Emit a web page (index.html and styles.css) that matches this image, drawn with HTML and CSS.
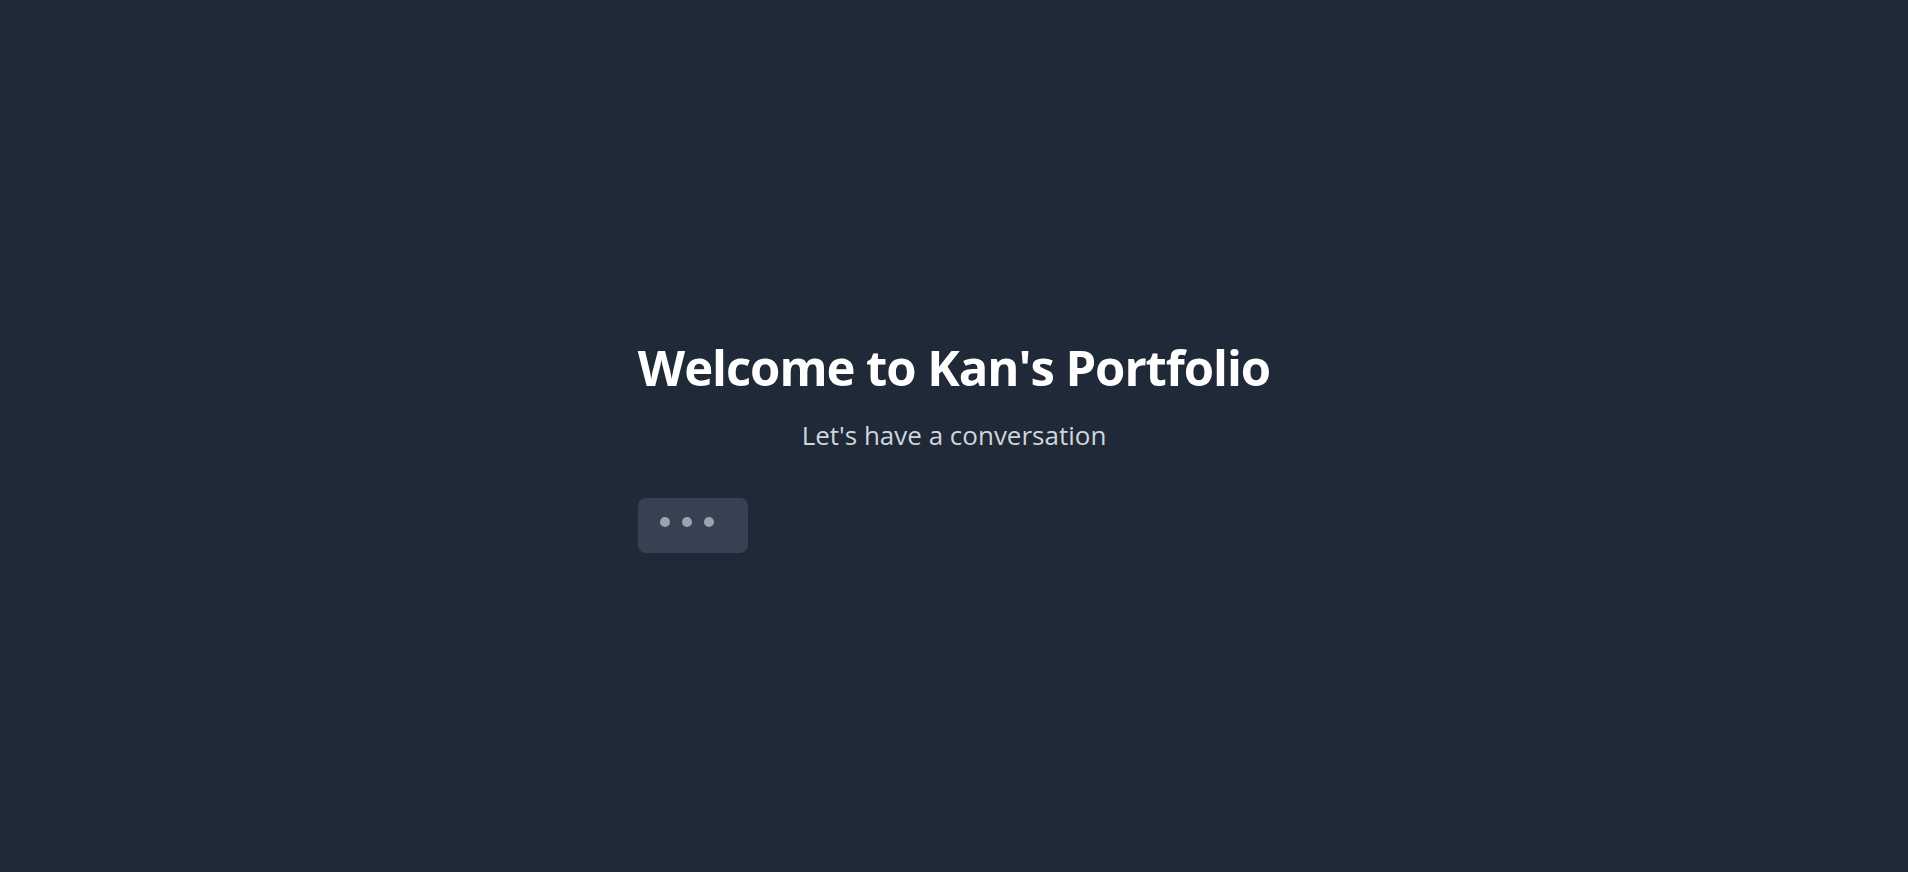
FILE: index.html
```html
<!DOCTYPE html>
<html lang="en">
<head>
<meta charset="utf-8">
<title>Kan's Portfolio</title>
<link rel="stylesheet" href="styles.css">
</head>
<body>
<main class="hero">
  <div class="content">
    <h1 class="title">Welcome to Kan's Portfolio</h1>
    <p class="subtitle">Let's have a conversation</p>
    <div class="chat">
      <div class="bubble typing">
        <span class="dot"></span>
        <span class="dot"></span>
        <span class="dot"></span>
      </div>
    </div>
  </div>
</main>
</body>
</html>
```
FILE: styles.css
```css
html, body {
  margin: 0;
  padding: 0;
}
body {
  background: #1f2937;
  min-height: 100vh;
  font-family: "Open Sans", "Noto Sans", "Liberation Sans", sans-serif;
}
.hero {
  display: flex;
  justify-content: center;
  padding-top: 337px;
}
.content {
  display: flex;
  flex-direction: column;
  width: fit-content;
}
.title {
  margin: 0;
  color: #ffffff;
  font-size: 49px;
  font-weight: 700;
  line-height: 60px;
  letter-spacing: -1.05px;
  text-align: center;
}
.subtitle {
  margin: 21px 0 0;
  color: #d1d5db;
  font-size: 26px;
  line-height: 34px;
  text-align: center;
}
.chat {
  margin-top: 46px;
  display: flex;
}
.bubble {
  width: 110px;
  height: 55px;
  box-sizing: border-box;
  background: #374151;
  border-radius: 8px;
}
.typing {
  display: flex;
  align-items: flex-start;
  gap: 12px;
  padding: 19px 0 0 22px;
}
.dot {
  width: 10px;
  height: 10px;
  border-radius: 50%;
  background: #9ca3af;
}
```
